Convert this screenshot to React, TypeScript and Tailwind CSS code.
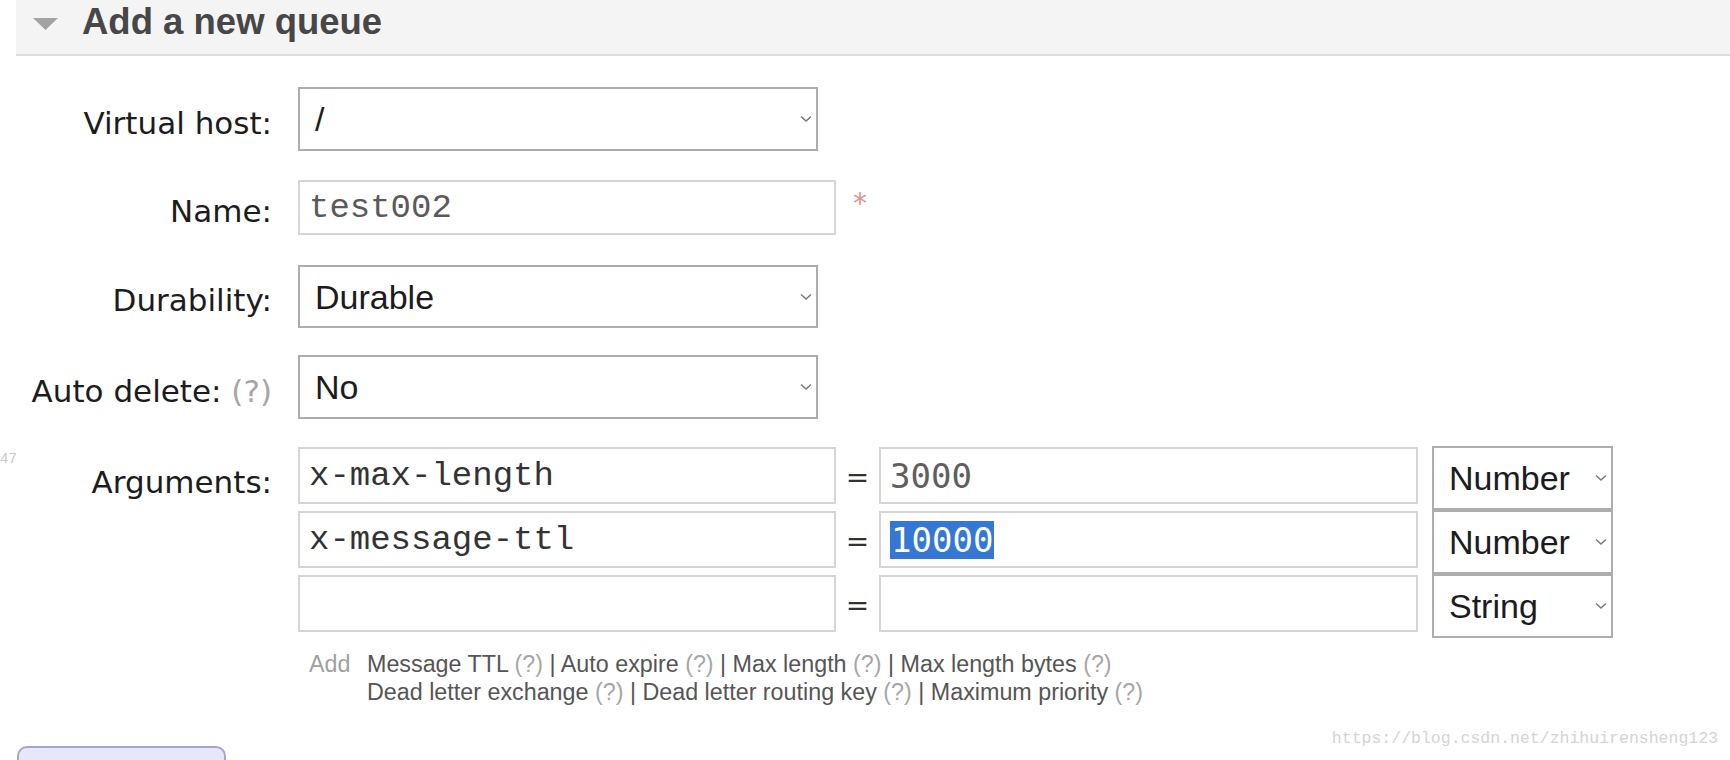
import React from 'react';

const LABEL =
  "w-[272px] shrink-0 pt-[8px] text-right font-['DejaVu_Sans',sans-serif] text-[31px] leading-none text-[#1c1c1c]";

function Chevron() {
  return (
    <svg width="12" height="7" viewBox="0 0 12 7" className="absolute right-[4px] top-1/2 -translate-y-1/2">
      <polyline points="1,1 6,5.5 11,1" fill="none" stroke="#7a7a7a" strokeWidth="1.6" />
    </svg>
  );
}

interface SelectProps {
  value: string;
  className?: string;
}

function FakeSelect({ value, className = '' }: SelectProps) {
  return (
    <div
      className={`relative flex shrink-0 items-center border-2 border-[#adadad] bg-white pl-[15px] font-['Liberation_Sans',Arial,sans-serif] text-[34px] leading-none text-[#1c1c1c] ${className}`}
    >
      {value}
      <Chevron />
    </div>
  );
}

interface InputProps {
  children?: React.ReactNode;
  className?: string;
}

function FakeInput({ children, className = '' }: InputProps) {
  return (
    <div
      className={`flex shrink-0 items-center border-2 border-[#d5d5d5] bg-white pl-[9px] text-[34px] leading-none ${className}`}
    >
      {children}
    </div>
  );
}

const args = [
  { key: 'x-max-length', value: '3000', type: 'Number' },
  { key: 'x-message-ttl', value: '10000', type: 'Number', selected: true },
  { key: '', value: '', type: 'String' },
];

function Help() {
  return <span className="text-[#a6a6a6]">(?)</span>;
}

export default function App() {
  return (
    <div className="relative h-[760px] w-[1730px] overflow-hidden bg-white">
      {/* section header */}
      <div className="ml-[16px] flex h-[56px] items-center border-b-2 border-[#dcdcdc] bg-[#f4f4f4]">
        <svg width="25" height="12" viewBox="0 0 25 12" className="ml-[17px] -mt-[6px]">
          <polygon points="0,0 25,0 12.5,12" fill="#a3a3a3" />
        </svg>
        <h2 className="ml-[24px] -mt-[9px] font-['Liberation_Sans',Arial,sans-serif] text-[36.5px] font-bold leading-none text-[#474747]">
          Add a new queue
        </h2>
      </div>

      {/* Virtual host */}
      <div className="mt-[31px] flex items-center">
        <label className={LABEL}>Virtual host:</label>
        <FakeSelect value="/" className="ml-[26px] h-[64px] w-[520px]" />
      </div>

      {/* Name */}
      <div className="mt-[29px] flex items-center">
        <label className={LABEL}>Name:</label>
        <FakeInput className="ml-[26px] h-[55px] w-[538px] font-['Liberation_Mono',monospace] text-[#5a5a5a]">
          test002
        </FakeInput>
        <span className="ml-[17px] mt-[10px] self-start font-['DejaVu_Sans',sans-serif] text-[28px] leading-none text-[#e58f8f]">
          *
        </span>
      </div>

      {/* Durability */}
      <div className="mt-[30px] flex items-center">
        <label className={LABEL}>Durability:</label>
        <FakeSelect value="Durable" className="ml-[26px] h-[63px] w-[520px]" />
      </div>

      {/* Auto delete */}
      <div className="mt-[27px] flex items-center">
        <label className={LABEL}>
          Auto delete: <Help />
        </label>
        <FakeSelect value="No" className="ml-[26px] h-[64px] w-[520px]" />
      </div>

      {/* Arguments */}
      <div className="mt-[27px] flex items-start">
        <div className="flex h-[64px] items-center">
          <label className={LABEL}>Arguments:</label>
        </div>
        <div className="ml-[26px] flex flex-col">
          {args.map((a, i) => (
            <div key={i} className="flex h-[64px] items-start">
              <FakeInput className="mt-[1px] h-[57px] w-[538px] font-['Liberation_Mono',monospace] text-[#333]">
                {a.key}
              </FakeInput>
              <span className="w-[43px] self-center text-center font-['DejaVu_Sans',sans-serif] text-[28px] leading-none text-[#333]">
                =
              </span>
              <FakeInput className="mt-[1px] h-[57px] w-[539px] font-['DejaVu_Sans_Mono',monospace] text-[33px] font-light text-[#5e5e5e]">
                {a.selected ? (
                  <span className="bg-[#3478d4] px-[1px] py-[2px] text-white">{a.value}</span>
                ) : (
                  a.value
                )}
              </FakeInput>
              <FakeSelect value={a.type} className="ml-[14px] h-[64px] w-[181px]" />
            </div>
          ))}

          {/* add shortcuts */}
          <div className="mt-[12px] flex pl-[11px] font-['Liberation_Sans',Arial,sans-serif] text-[23.3px] leading-[28px] text-[#555]">
            <span className="w-[58px] shrink-0 text-[#a0a0a0]">Add</span>
            <div>
              <div>
                Message TTL <Help /> | Auto expire <Help /> | Max length <Help /> | Max length bytes <Help />
              </div>
              <div>
                Dead letter exchange <Help /> | Dead letter routing key <Help /> | Maximum priority <Help />
              </div>
            </div>
          </div>
        </div>
      </div>

      {/* submit button, cut off at bottom */}
      <div className="ml-[17px] mt-[40px] h-[30px] w-[209px] rounded-t-[10px] border-2 border-[#a4a4db] bg-[#e7e7fa]"></div>

      {/* stray gutter number */}
      <span className="absolute left-0 top-[449px] font-['Liberation_Mono',monospace] text-[14px] text-[#c9c9c9]">
        47
      </span>

      {/* watermark */}
      <span className="absolute right-[12px] top-[727px] font-['Liberation_Mono',monospace] text-[16.5px] text-[#d4d4d4]">
        https://blog.csdn.net/zhihuirensheng123
      </span>
    </div>
  );
}
